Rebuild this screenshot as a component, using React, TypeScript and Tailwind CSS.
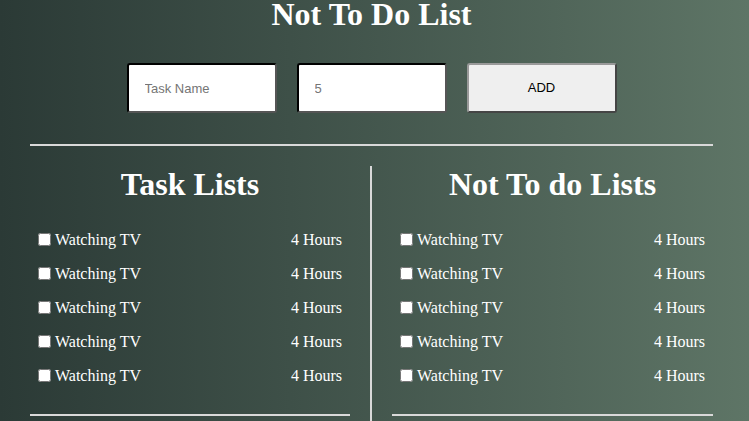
import React from "react";

const rows = [1, 2, 3, 4, 5];

function Column({ title }: { title: string }) {
  return (
    <div className="flex flex-col w-full">
      <h2 className="mt-[2px] text-center text-[32px] leading-[32px] font-bold text-white">{title}</h2>
      <div className="mt-[22.5px] flex flex-col">
        {rows.map((r) => (
          <div key={r} className="flex items-center justify-between h-[34px] pl-2 pr-2 text-[16px] text-white">
            <div className="flex items-center gap-[4px]">
              <input type="checkbox" className="m-0 w-[13px] h-[13px]" />
              <span>Watching TV</span>
            </div>
            <span>4 Hours</span>
          </div>
        ))}
      </div>
      <div className="mt-[21px] h-[2px] bg-[#d9d9d9]" />
    </div>
  );
}

export default function App() {
  return (
    <div
      className="w-full h-[421px] overflow-hidden bg-linear-to-r from-[#2b3a36] to-[#5e7566]"
      style={{ fontFamily: '"Liberation Serif", "Times New Roman", serif' }}
    >
      <div className="ml-[30px] w-[683px] flex flex-col">
        <h1 className="text-center text-[32px] leading-[28px] font-bold text-white">Not To Do List</h1>
        <div
          className="mt-[35px] flex justify-center gap-[20px] text-[13px]"
          style={{ fontFamily: '"Liberation Sans", Arial, sans-serif' }}
        >
          <input
            placeholder="Task Name"
            className="w-[150px] h-[50px] bg-white rounded-[3px] border-2 border-[#555] [border-style:inset] pl-4 text-[#333] placeholder:text-[#757575] outline-none"
          />
          <input
            defaultValue="5"
            className="w-[150px] h-[50px] bg-white rounded-[3px] border-2 border-[#555] [border-style:inset] pl-4 text-[#757575] outline-none"
          />
          <button className="w-[150px] h-[50px] bg-[#efefef] rounded-[3px] border-2 border-[#999] [border-style:outset] text-black">
            ADD
          </button>
        </div>
        <div className="mt-[31px] h-[2px] bg-[#d9d9d9]" />
        <div className="mt-[20px] flex">
          <div className="w-[320px]">
            <Column title="Task Lists" />
          </div>
          <div className="w-[42px] flex justify-center">
            <div className="w-[2px] h-[260px] bg-[#d9d9d9]" />
          </div>
          <div className="w-[321px]">
            <Column title="Not To do Lists" />
          </div>
        </div>
      </div>
    </div>
  );
}
